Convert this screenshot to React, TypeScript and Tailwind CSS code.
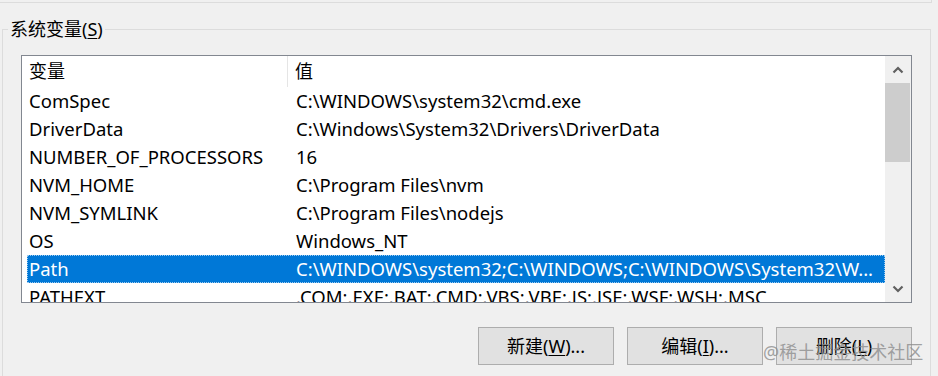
const rows: [string, string][] = [
  ["ComSpec", "C:\\WINDOWS\\system32\\cmd.exe"],
  ["DriverData", "C:\\Windows\\System32\\Drivers\\DriverData"],
  ["NUMBER_OF_PROCESSORS", "16"],
  ["NVM_HOME", "C:\\Program Files\\nvm"],
  ["NVM_SYMLINK", "C:\\Program Files\\nodejs"],
  ["OS", "Windows_NT"],
  ["Path", "C:\\WINDOWS\\system32;C:\\WINDOWS;C:\\WINDOWS\\System32\\W..."],
  ["PATHEXT", ".COM;.EXE;.BAT;.CMD;.VBS;.VBE;.JS;.JSE;.WSF;.WSH;.MSC"],
]

const font = { fontFamily: '"Noto Sans", "Noto Sans CJK SC", sans-serif' }

function Chevron({ up }: { up?: boolean }) {
  return (
    <svg width="12" height="8" viewBox="0 0 12 8">
      <path
        d={up ? "M1.5 6.5 L6 2 L10.5 6.5" : "M1.5 1.5 L6 6 L10.5 1.5"}
        fill="none"
        stroke="#606060"
        strokeWidth="2.2"
      />
    </svg>
  )
}

export default function App() {
  return (
    <div
      className="relative w-[938px] h-[376px] overflow-hidden bg-[#f0f0f0] text-black text-[18px]"
      style={font}
    >
      <div className="w-[932px] h-[3px] border-b border-r border-[#dcdcdc]"></div>

      <fieldset className="ml-[2px] mt-[16px] w-[929px] h-[400px] border border-[#dcdcdc]">
        <legend className="ml-[5px] px-[2px] leading-[20px]">
          系统变量(<span className="underline underline-offset-2">S</span>)
        </legend>

        <div className="ml-[18px] mt-[16px] w-[891px] h-[248px] border border-[#828790] bg-white flex overflow-hidden">
          <div className="flex-1 pl-[5px] flex flex-col text-[18.5px]">
            <div className="h-[31px] flex items-center shrink-0">
              <div className="w-[261px] h-full pl-[2px] flex items-center border-r border-[#e5e5e5] text-[18px]">变量</div>
              <div className="pl-[7px] text-[18px]">值</div>
            </div>
            {rows.map(([name, value]) => {
              const selected = name === "Path"
              return (
                <div
                  key={name}
                  className={
                    selected
                      ? "h-[28px] shrink-0 flex items-center whitespace-nowrap bg-[#0078d7] text-white outline outline-1 outline-dotted outline-[#9ccbf0] -outline-offset-1"
                      : "h-[28px] shrink-0 flex items-center whitespace-nowrap"
                  }
                >
                  <div className="w-[261px] pl-[2px]">{name}</div>
                  <div className="pl-[8px]">{value}</div>
                </div>
              )
            })}
          </div>

          <div className="w-[26px] shrink-0 bg-[#f0f0f0] flex flex-col">
            <div className="h-[27px] flex items-center justify-center">
              <Chevron up />
            </div>
            <div className="h-[79px] w-[25px] bg-[#cdcdcd]"></div>
            <div className="flex-1"></div>
            <div className="h-[27px] flex items-center justify-center">
              <Chevron />
            </div>
          </div>
        </div>

        <div className="mt-[24px] w-[909px] flex justify-end gap-[13px]">
          <button className="w-[136px] h-[38px] bg-[#e1e1e1] border border-[#adadad]">
            新建(<span className="underline underline-offset-2">W</span>)...
          </button>
          <button className="w-[136px] h-[38px] bg-[#e1e1e1] border border-[#adadad]">
            编辑(<span className="underline underline-offset-2">I</span>)...
          </button>
          <button className="w-[136px] h-[38px] bg-[#e1e1e1] border border-[#adadad]">
            删除(<span className="underline underline-offset-2">L</span>)
          </button>
        </div>
      </fieldset>

      <div className="absolute left-[763px] top-[339px] text-[18px] text-[#8c8c8c]/80 whitespace-nowrap">
        @稀土掘金技术社区
      </div>
    </div>
  )
}
